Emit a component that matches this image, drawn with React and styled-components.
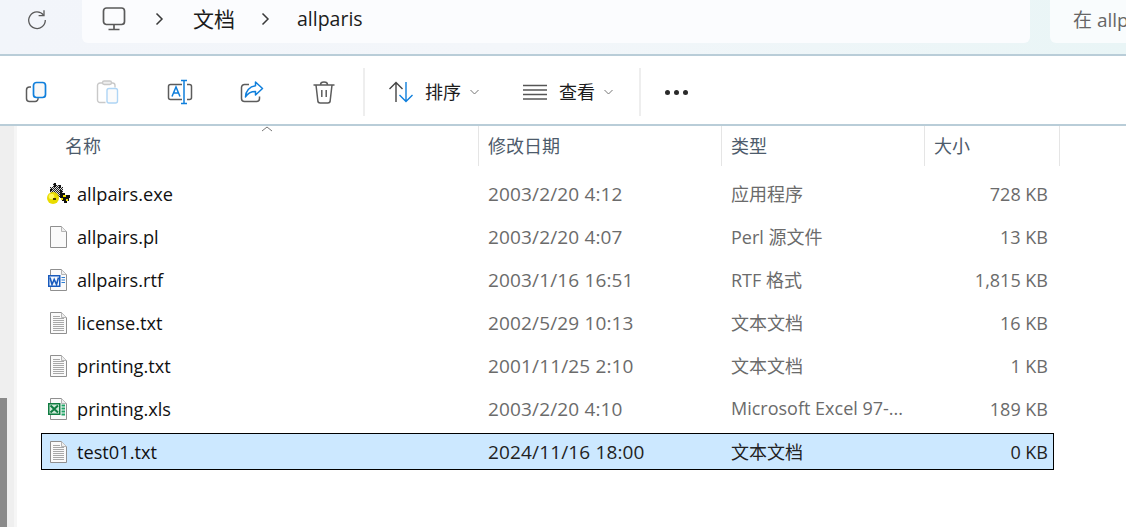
import React from "react";
import styled, { createGlobalStyle } from "styled-components";

const FONT = `"Open Sans", "Noto Sans CJK SC", sans-serif`;

const GlobalStyle = createGlobalStyle`
  html, body {
    margin: 0;
    padding: 0;
    background: #fff;
    overflow: hidden;
  }
  body {
    font-family: ${FONT};
  }
  * {
    box-sizing: border-box;
  }
`;

const files = [
  { name: "allpairs.exe", date: "2003/2/20 4:12", type: "应用程序", size: "728 KB", icon: "exe" },
  { name: "allpairs.pl", date: "2003/2/20 4:07", type: "Perl 源文件", size: "13 KB", icon: "blank" },
  { name: "allpairs.rtf", date: "2003/1/16 16:51", type: "RTF 格式", size: "1,815 KB", icon: "word" },
  { name: "license.txt", date: "2002/5/29 10:13", type: "文本文档", size: "16 KB", icon: "text" },
  { name: "printing.txt", date: "2001/11/25 2:10", type: "文本文档", size: "1 KB", icon: "text" },
  { name: "printing.xls", date: "2003/2/20 4:10", type: "Microsoft Excel 97-...", size: "189 KB", icon: "excel" },
  { name: "test01.txt", date: "2024/11/16 18:00", type: "文本文档", size: "0 KB", icon: "text", selected: true },
];

const DocBase = ({ children }) => (
  <svg width="24" height="24" viewBox="0 0 24 24">
    <path d="M5.500 1.500H16.500L21.500 6.500V22.500H5.500Z" fill="#fafafa" stroke="#8f8f8f" />
    <path d="M16.500 1.500V6.500H21.500" fill="#eeeeee" stroke="#b5b5b5" />
    {children}
  </svg>
);

const TextLines = () => (
  <path
    d="M8 5.500H15M8 7.500H19M8 9.500H19M8 11.500H19M8 13.500H19M8 15.500H19M8 17.500H19M8 19.500H19"
    stroke="#a8a8a8"
    strokeWidth="1"
  />
);

const FileIcon = ({ kind }) => {
  if (kind === "blank") return <DocBase />;
  if (kind === "text") {
    return (
      <DocBase>
        <TextLines />
      </DocBase>
    );
  }
  if (kind === "word") {
    return (
      <DocBase>
        <path d="M16.500 9.500H20M16.500 12H20M16.500 14.500H20" stroke="#2b7cd3" />
        <rect x="3" y="7" width="12.500" height="12" fill="#185abd" />
        <rect x="4.500" y="8.500" width="9.500" height="9" fill="#f4f8fd" />
        <path d="M5 9.500L7 16.500L9.200 11.500L11.500 16.500L13.500 9.500" fill="none" stroke="#185abd" strokeWidth="1.600" />
      </DocBase>
    );
  }
  if (kind === "excel") {
    return (
      <DocBase>
        <path d="M16.500 8.500H20M16.500 11.500H20M16.500 14.500H20M16.500 17.500H20" stroke="#21a366" strokeWidth="1.800" />
        <rect x="3" y="6" width="12.500" height="12" fill="#107c41" />
        <rect x="4.500" y="7.500" width="9.500" height="9" fill="#cfe9d9" />
        <path d="M5.500 8.500L13 15.500M13 8.500L5.500 15.500" stroke="#107c41" strokeWidth="2" />
      </DocBase>
    );
  }
  return (
    <svg width="26" height="24" viewBox="0 0 26 24" shapeRendering="crispEdges">
      <defs>
        <pattern id="dither" width="2" height="2" patternUnits="userSpaceOnUse">
          <rect width="2" height="2" fill="#d8d8d8" />
          <rect width="1" height="1" fill="#222" />
          <rect x="1" y="1" width="1" height="1" fill="#222" />
        </pattern>
      </defs>
      <path d="M8 1h3v2h3v2h4v7h-2v3H5V5h3Z" fill="url(#dither)" />
      <path d="M9 1h2v4H9ZM14 3h2v3h-2ZM5 7h2v2H5Z" fill="#111" />
      <path d="M15 8h2v3h3v2h5v3h-1v3h-2v2h-3v-2h-2v-3h-2Z" fill="#111" />
      <path d="M18 13h3v2h-3ZM21 17h2v2h-2ZM16 16h2v2h-2Z" fill="#f1e100" />
      <circle cx="8" cy="16" r="6" fill="#e9dc00" shapeRendering="auto" />
      <circle cx="6.500" cy="14.500" r="2.800" fill="#fff65a" shapeRendering="auto" />
      <path d="M8 16h3v2H8Z" fill="#4a4400" />
    </svg>
  );
};

const BLUE = "#0f7fdc";
const GREY = "#5c5c5c";

const RefreshIcon = () => (
  <svg width="24" height="24" viewBox="0 0 24 24" fill="none" stroke="#5a5a5a" strokeWidth="1.300">
    <path d="M18.600 8.200A8.300 8.300 0 1 0 20.300 13" />
    <path d="M19 3.200V8.600H13.600" />
  </svg>
);

const MonitorIcon = () => (
  <svg width="26" height="26" viewBox="0 0 26 26" fill="none" stroke="#5a5a5a" strokeWidth="1.700">
    <rect x="2.500" y="2" width="21" height="16.500" rx="3" />
    <path d="M13 18.500V23M7.500 23.500H18.500" />
  </svg>
);

const CrumbChevron = () => (
  <svg width="10" height="14" viewBox="0 0 10 14" fill="none" stroke="#3a3a3a" strokeWidth="1.500">
    <path d="M2.500 1.500L8 7L2.500 12.500" />
  </svg>
);

const CopyIcon = () => (
  <svg width="24" height="24" viewBox="0 0 24 24" fill="none" strokeWidth="1.500">
    <path d="M7 7H5.500A3 3 0 0 0 2.500 10V18.500A3 3 0 0 0 5.500 21.500H11A3 3 0 0 0 14 18" stroke={GREY} />
    <rect x="9.500" y="2.500" width="12" height="15" rx="3" stroke={BLUE} strokeWidth="1.700" fill="#f8f8f8" />
  </svg>
);

const PasteIcon = () => (
  <svg width="24" height="26" viewBox="0 0 24 26" fill="none" strokeWidth="1.400">
    <path d="M8 4H4A2.500 2.500 0 0 0 1.500 6.500V21A2.500 2.500 0 0 0 4 23.500H9.500M19 8.500V6.500A2.500 2.500 0 0 0 16.500 4H14" stroke="#c9c9c9" />
    <rect x="6.500" y="2" width="9" height="3.500" rx="1.700" stroke="#c9c9c9" fill="#eee" />
    <rect x="11" y="9.500" width="10.500" height="14.500" rx="2" stroke="#afd5f5" fill="#fbfbfb" />
  </svg>
);

const RenameIcon = () => (
  <svg width="26" height="26" viewBox="0 0 26 26" fill="none" strokeWidth="1.500">
    <path d="M15 5.500H3.500A2 2 0 0 0 1.500 7.500V18.500A2 2 0 0 0 3.500 20.500H15M20 5.500H22.500A2 2 0 0 1 24.500 7.500V18.500A2 2 0 0 1 22.500 20.500H20" stroke={GREY} />
    <path d="M14 1.500H20M17 1.500V24.500M14 24.500H20" stroke={BLUE} />
    <path d="M5 17.500L9 8L13 17.500M6.500 14H11.500" stroke={BLUE} />
  </svg>
);

const ShareIcon = () => (
  <svg width="24" height="24" viewBox="0 0 24 24" fill="none" strokeWidth="1.500">
    <path d="M9 4.500H4.500A3 3 0 0 0 1.500 7.500V18.500A3 3 0 0 0 4.500 21.500H16.500A3 3 0 0 0 19.500 18.500V16.500" stroke={GREY} />
    <path d="M15.500 2L22.500 8.500L15.500 15V11.500C10.500 11.500 7.500 13.500 5.500 17C5.500 11 9.500 6.500 15.500 5.800Z" stroke={BLUE} strokeLinejoin="round" />
  </svg>
);

const TrashIcon = () => (
  <svg width="24" height="26" viewBox="0 0 24 26" fill="none" stroke={GREY} strokeWidth="1.500">
    <path d="M1.500 6H22.500M8.500 5.500C8.500 2 15.500 2 15.500 5.500" />
    <path d="M4 6L5.800 21.500A2.500 2.500 0 0 0 8.300 24H15.700A2.500 2.500 0 0 0 18.200 21.500L20 6" />
    <path d="M9.800 11V18M14.200 11V18" />
  </svg>
);

const SortIcon = () => (
  <svg width="26" height="24" viewBox="0 0 26 24" fill="none" strokeWidth="1.400">
    <path d="M8 22V2.500M1.500 9L8 2.500L14.500 9" stroke="#444" />
    <path d="M18 2V21.500M11.500 15L18 21.500L24.500 15" stroke={BLUE} />
  </svg>
);

const ViewIcon = () => (
  <svg width="24" height="16" viewBox="0 0 24 16" fill="none" stroke="#555" strokeWidth="1.500">
    <path d="M0 1.500H24M0 6H24M0 10.500H24M0 15H24" />
  </svg>
);

const TinyChevron = () => (
  <svg width="9" height="6" viewBox="0 0 9 6" fill="none" stroke="#777" strokeWidth="1">
    <path d="M0.500 1L4.500 5L8.500 1" />
  </svg>
);

const App = () => {
  return (
    <>
      <GlobalStyle />
      <Page>
        <TopBar>
          <RefreshSlot>
            <RefreshIcon />
          </RefreshSlot>
          <AddressBox>
            <MonitorSlot>
              <MonitorIcon />
            </MonitorSlot>
            <CrumbChevron />
            <CrumbCjk>文档</CrumbCjk>
            <CrumbChevron />
            <CrumbLatin>allparis</CrumbLatin>
          </AddressBox>
          <SearchBox>在 allparis 中搜索</SearchBox>
        </TopBar>
        <Toolbar>
          <ToolButton><CopyIcon /></ToolButton>
          <ToolButton><PasteIcon /></ToolButton>
          <ToolButton><RenameIcon /></ToolButton>
          <ToolButton><ShareIcon /></ToolButton>
          <ToolButton><TrashIcon /></ToolButton>
          <ToolDivider />
          <SortButton>
            <SortIcon />
            <MenuLabel>排序</MenuLabel>
            <TinyChevron />
          </SortButton>
          <ViewButton>
            <ViewIcon />
            <MenuLabel>查看</MenuLabel>
            <TinyChevron />
          </ViewButton>
          <ToolDivider />
          <MoreDots>
            <i />
            <i />
            <i />
          </MoreDots>
        </Toolbar>
        <Body>
          <ScrollTrack>
            <ScrollThumb />
          </ScrollTrack>
          <ListArea>
            <HeaderRow>
              <SortCaret>
                <svg width="12" height="6" viewBox="0 0 12 6" fill="none" stroke="#777" strokeWidth="1">
                  <path d="M1 5L6 1L11 5" />
                </svg>
              </SortCaret>
              <HeaderCell $w={462} $pad={48}>名称</HeaderCell>
              <HeaderCell $w={243}>修改日期</HeaderCell>
              <HeaderCell $w={203}>类型</HeaderCell>
              <HeaderCell $w={135}>大小</HeaderCell>
            </HeaderRow>
            <Rows>
              {files.map((f) => (
                <Row key={f.name} $selected={f.selected}>
                  <NameCell>
                    <IconSlot>
                      <FileIcon kind={f.icon} />
                    </IconSlot>
                    {f.name}
                  </NameCell>
                  <DateCell $selected={f.selected}>{f.date}</DateCell>
                  <TypeCell $selected={f.selected}>{f.type}</TypeCell>
                  <SizeCell $selected={f.selected}>{f.size}</SizeCell>
                </Row>
              ))}
            </Rows>
          </ListArea>
        </Body>
      </Page>
    </>
  );
};

export default App;

const Page = styled.div`
  width: 1126px;
  height: 527px;
  display: flex;
  flex-direction: column;
  overflow: hidden;
  background: #fff;
`;

const TopBar = styled.header`
  height: 56px;
  flex: none;
  display: flex;
  align-items: flex-start;
  background: linear-gradient(90deg, #f2f5fa 0%, #f3f6fa 45%, #e9f5f6 100%);
  border-bottom: 2px solid #b9cdd8;
`;

const RefreshSlot = styled.div`
  width: 82px;
  height: 42px;
  padding: 7px 0 0 25px;
  flex: none;
`;

const AddressBox = styled.div`
  width: 948px;
  height: 43px;
  flex: none;
  display: flex;
  align-items: center;
  padding: 0 0 5px 19px;
  background: #fbfcfe;
  border-radius: 0 0 6px 6px;
  color: #1c1c1c;
`;

const MonitorSlot = styled.div`
  width: 53px;
  height: 26px;
`;

const CrumbCjk = styled.span`
  margin: 0 25px 0 29px;
  font-size: 21px;
  line-height: 26px;
`;

const CrumbLatin = styled.span`
  margin-left: 27px;
  font-size: 19.5px;
  line-height: 26px;
`;

const SearchBox = styled.div`
  margin-left: 20px;
  flex: 1;
  height: 43px;
  padding: 6px 0 0 23px;
  font-size: 19px;
  line-height: 28px;
  color: #666;
  white-space: nowrap;
  overflow: hidden;
  background: #f9fcfd;
  border-radius: 0 0 0 6px;
`;

const Toolbar = styled.div`
  height: 70px;
  flex: none;
  display: flex;
  align-items: center;
  padding-top: 4px;
  background: #fff;
  border-bottom: 2px solid #b9cdd8;
`;

const ToolButton = styled.div`
  width: 72px;
  height: 48px;
  display: flex;
  align-items: center;
  justify-content: center;
`;

const ToolDivider = styled.div`
  width: 2px;
  height: 48px;
  background: #eeeeee;
  margin-left: 3px;
`;

const SortButton = styled.div`
  display: flex;
  align-items: center;
  flex: none;
  width: 158px;
  height: 48px;
  padding-left: 23px;
  color: #1c1c1c;
`;

const ViewButton = styled(SortButton)`
  width: 113px;
  padding-left: 0;
`;

const MenuLabel = styled.span`
  margin: 0 9px 0 11px;
  font-size: 18px;
  line-height: 24px;
  ${ViewButton} & {
    margin-left: 12px;
  }
`;

const MoreDots = styled.div`
  margin-left: 24px;
  display: flex;
  gap: 4px;
  i {
    width: 5px;
    height: 5px;
    border-radius: 50%;
    background: #2a2a2a;
  }
`;

const Body = styled.main`
  flex: 1;
  display: flex;
  min-height: 0;
`;

const ScrollTrack = styled.div`
  width: 17px;
  flex: none;
  padding-top: 272px;
  background: linear-gradient(90deg, #efefef 0, #efefef 14px, #f6f6f6 14px);
`;

const ScrollThumb = styled.div`
  width: 7px;
  height: 129px;
  background: #8a8a8a;
`;

const ListArea = styled.div`
  flex: 1;
  min-width: 0;
`;

const HeaderRow = styled.div`
  position: relative;
  display: flex;
  height: 40px;
`;

const SortCaret = styled.div`
  position: absolute;
  left: 244px;
  top: 0;
  line-height: 0;
`;

const HeaderCell = styled.div`
  width: ${(p) => p.$w}px;
  padding-left: ${(p) => p.$pad ?? 9}px;
  font-size: 18px;
  line-height: 41px;
  color: #4d5b6b;
  border-right: 1px solid #e5e5e5;
`;

const Rows = styled.div`
  display: flex;
  flex-direction: column;
  gap: 7px;
  margin: 10px 0 0 24px;
  width: 1013px;
`;

const Row = styled.div`
  display: grid;
  grid-template-columns: 447px 243px 1fr auto;
  align-items: center;
  height: ${(p) => (p.$selected ? "37px" : "36px")};
  margin-top: ${(p) => (p.$selected ? "-1px" : "0")};
  padding-right: 6px;
  font-size: 18px;
  background: ${(p) => (p.$selected ? "#cce8ff" : "transparent")};
  outline: ${(p) => (p.$selected ? "1px solid #000" : "none")};
  outline-offset: -1px;
`;

const NameCell = styled.div`
  display: flex;
  align-items: center;
  font-size: 18.2px;
  color: #111;
  white-space: nowrap;
`;

const IconSlot = styled.span`
  width: 36px;
  height: 24px;
  padding-left: 4px;
  flex: none;
`;

const DimCell = styled.div`
  color: ${(p) => (p.$selected ? "#222" : "#6b6b6b")};
  white-space: nowrap;
`;

const DateCell = styled(DimCell)`
  font-size: 19px;
  letter-spacing: 0.15px;
`;

const TypeCell = styled(DimCell)`
  padding-bottom: 2px;
`;

const SizeCell = styled(DimCell)`
  text-align: right;
`;
